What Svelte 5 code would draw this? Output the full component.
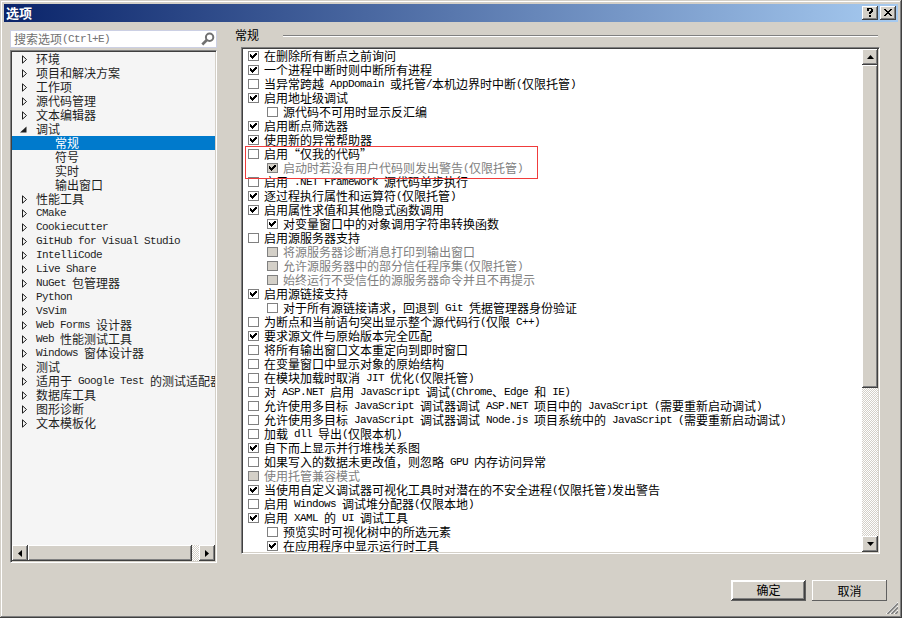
<script>
  // level 0 = top category, level 1 = page inside an open category
  const tree = [
    { text: "环境" },
    { text: "项目和解决方案" },
    { text: "工作项" },
    { text: "源代码管理" },
    { text: "文本编辑器" },
    { text: "调试", open: true },
    { text: "常规", level: 1 },
    { text: "符号", level: 1 },
    { text: "实时", level: 1 },
    { text: "输出窗口", level: 1 },
    { text: "性能工具" },
    { text: "CMake" },
    { text: "Cookiecutter" },
    { text: "GitHub for Visual Studio" },
    { text: "IntelliCode" },
    { text: "Live Share" },
    { text: "NuGet 包管理器" },
    { text: "Python" },
    { text: "VsVim" },
    { text: "Web Forms 设计器" },
    { text: "Web 性能测试工具" },
    { text: "Windows 窗体设计器" },
    { text: "测试" },
    { text: "适用于 Google Test 的测试适配器" },
    { text: "数据库工具" },
    { text: "图形诊断" },
    { text: "文本模板化" },
  ];

  let options = [
    { text: "在删除所有断点之前询问", on: true },
    { text: "一个进程中断时则中断所有进程", on: true },
    { text: "当异常跨越 AppDomain 或托管/本机边界时中断(仅限托管)" },
    { text: "启用地址级调试", on: true },
    { text: "源代码不可用时显示反汇编", sub: true },
    { text: "启用断点筛选器", on: true },
    { text: "使用新的异常帮助器", on: true },
    { text: "启用“仅我的代码”" },
    { text: "启动时若没有用户代码则发出警告(仅限托管)", sub: true, on: true, off: true },
    { text: "启用 .NET Framework 源代码单步执行" },
    { text: "逐过程执行属性和运算符(仅限托管)", on: true },
    { text: "启用属性求值和其他隐式函数调用", on: true },
    { text: "对变量窗口中的对象调用字符串转换函数", sub: true, on: true },
    { text: "启用源服务器支持" },
    { text: "将源服务器诊断消息打印到输出窗口", sub: true, off: true },
    { text: "允许源服务器中的部分信任程序集(仅限托管)", sub: true, off: true },
    { text: "始终运行不受信任的源服务器命令并且不再提示", sub: true, off: true },
    { text: "启用源链接支持", on: true },
    { text: "对于所有源链接请求，回退到 Git 凭据管理器身份验证", sub: true },
    { text: "为断点和当前语句突出显示整个源代码行(仅限 C++)" },
    { text: "要求源文件与原始版本完全匹配", on: true },
    { text: "将所有输出窗口文本重定向到即时窗口" },
    { text: "在变量窗口中显示对象的原始结构" },
    { text: "在模块加载时取消 JIT 优化(仅限托管)" },
    { text: "对 ASP.NET 启用 JavaScript 调试(Chrome、Edge 和 IE)" },
    { text: "允许使用多目标 JavaScript 调试器调试 ASP.NET 项目中的 JavaScript (需要重新启动调试)" },
    { text: "允许使用多目标 JavaScript 调试器调试 Node.js 项目系统中的 JavaScript (需要重新启动调试)" },
    { text: "加载 dll 导出(仅限本机)" },
    { text: "自下而上显示并行堆栈关系图", on: true },
    { text: "如果写入的数据未更改值，则忽略 GPU 内存访问异常" },
    { text: "使用托管兼容模式", off: true },
    { text: "当使用自定义调试器可视化工具时对潜在的不安全进程(仅限托管)发出警告", on: true },
    { text: "启用 Windows 调试堆分配器(仅限本地)" },
    { text: "启用 XAML 的 UI 调试工具", on: true },
    { text: "预览实时可视化树中的所选元素", sub: true },
    { text: "在应用程序中显示运行时工具", sub: true, on: true },
  ];

  let selected = "常规";

  function pick(item) {
    if (item.level) selected = item.text;
  }

  function toggle(opt) {
    if (opt.off) return;
    opt.on = !opt.on;
    options = options;
  }

  // latin letters take half the width of a han character, so they get their own span
  function runs(text) {
    return text.match(/[\x20-\x7e]+|[^\x20-\x7e]+/g);
  }
</script>

{#snippet mixed(text)}{#each runs(text) as r}<span class:latin={r.charCodeAt(0) < 127}>{r}</span>{/each}{/snippet}

<div class="window">
  <header>
    <h1>选项</h1>
    <button class="cap raised" aria-label="帮助">
      <svg width="8" height="10" viewBox="0 0 8 10" shape-rendering="crispEdges">
        <path d="M1 0h5v1h1v3h-1v1h-1v1h-2v-2h1v-1h1v-2h-2v2h-2v-2h0zM3 7h2v2h-2z" />
      </svg>
    </button>
    <button class="cap raised" aria-label="关闭">
      <svg width="8" height="7" viewBox="0 0 8 7" shape-rendering="crispEdges">
        <path d="M0 0h2v1h1v1h2v-1h1v-1h2v1h-1v1h-1v1h-1v1h1v1h1v1h1v1h-2v-1h-1v-1h-2v1h-1v1h-2v-1h1v-1h1v-1h1v-1h-1v-1h-1v-1h-1z" />
      </svg>
    </button>
  </header>

  <main>
    <section class="left">
      <div class="search">
        <span class="hint">{@render mixed("搜索选项(Ctrl+E)")}</span>
        <svg width="14" height="14" viewBox="0 0 14 14">
          <circle cx="8.6" cy="5.2" r="3.7" fill="none" stroke="#717171" stroke-width="2" />
          <path d="M5.8 8L1.3 12.5" stroke="#717171" stroke-width="2.6" />
        </svg>
      </div>

      <div class="tree sunken">
        <ul>
          {#each tree as item}
            <li class:child={item.level} class:selected={item.level && item.text === selected}>
              <button class="node" on:click={() => pick(item)}>
                <i class="arrow" class:open={item.open}>
                  {#if item.open}
                    <svg width="7" height="7" viewBox="0 0 7 7"><path d="M6.5 .5v6h-6.5z" fill="#1e1e1e" /></svg>
                  {:else if !item.level}
                    <svg width="6" height="9" viewBox="0 0 6 9"><path d="M.5 .8v7.4l4-3.7z" fill="none" stroke="#1e1e1e" /></svg>
                  {/if}
                </i>
                {@render mixed(item.text)}
              </button>
            </li>
          {/each}
        </ul>
        <div class="hbar">
          <div class="sbtn raised"><svg width="4" height="7" viewBox="0 0 4 7"><path d="M4 0v7l-4-3.5z" /></svg></div>
          <div class="thumb raised"></div>
          <div class="sbtn raised last"><svg width="4" height="7" viewBox="0 0 4 7"><path d="M0 0v7l4-3.5z" /></svg></div>
        </div>
      </div>
    </section>

    <section class="right">
      <h2>常规</h2>
      <div class="list sunken">
        <ul>
          {#each options as opt}
            <li class:sub={opt.sub} class:disabled={opt.off}>
              <button class="option" on:click={() => toggle(opt)}>
                <i class="box">
                  {#if opt.on}
                    <svg width="7" height="6" viewBox="0 0 7 6" shape-rendering="crispEdges">
                      <path d="M0 1h1v1h1v1h1v-1h1v-1h1v-1h2v2h-1v1h-1v1h-1v1h-1v1h-1v-1h-1v-1h-1z" />
                    </svg>
                  {/if}
                </i>
                {@render mixed(opt.text)}
              </button>
            </li>
          {/each}
        </ul>
        <div class="vbar">
          <div class="sbtn raised"><svg width="7" height="4" viewBox="0 0 7 4"><path d="M0 4h7l-3.5-4z" /></svg></div>
          <div class="thumb raised"></div>
          <div class="sbtn raised last"><svg width="7" height="4" viewBox="0 0 7 4"><path d="M0 0h7l-3.5 4z" /></svg></div>
        </div>
        <div class="marker"></div>
      </div>
    </section>
  </main>

  <footer>
    <button class="push default"><span class="raised">确定</span></button>
    <button class="push"><span>取消</span></button>
  </footer>

  <svg class="grip" width="12" height="12" viewBox="0 0 12 12">
    <path d="M0 12L12 0M4 12L12 4M8 12L12 8" stroke="#fff" />
    <path d="M1.4 12L12 1.4M5.4 12L12 5.4M9.4 12L12 9.4" stroke="#808080" stroke-width="1.7" />
  </svg>
</div>

<style>
  :global(body) {
    overflow: hidden;
  }

  .window {
    position: relative;
    display: flex;
    flex-direction: column;
    width: 902px;
    height: 618px;
    box-sizing: border-box;
    padding: 4px;
    background: #d4d0c8;
    box-shadow:
      inset -1px -1px #404040,
      inset 1px 1px #d4d0c8,
      inset -2px -2px #808080,
      inset 2px 2px #fff;
    font: 12px/14px "Noto Sans CJK SC", sans-serif;
    color: #000;
  }

  button {
    font: inherit;
    color: inherit;
    background: none;
    border: 0;
    padding: 0;
    margin: 0;
  }

  ul {
    list-style: none;
    margin: 0;
    padding: 0;
  }

  .latin {
    font-family: "Liberation Mono", monospace;
    font-size: 11px;
    letter-spacing: -0.6px;
    white-space: pre;
  }

  .raised {
    background: #d4d0c8;
    box-shadow:
      inset -1px -1px #404040,
      inset 1px 1px #fff,
      inset -2px -2px #808080;
  }

  .sunken {
    box-sizing: border-box;
    border: 1px solid;
    border-color: #808080 #fff #fff #808080;
    padding: 1px;
    box-shadow:
      inset 1px 1px #404040,
      inset -1px -1px #d4d0c8;
  }

  header {
    display: flex;
    align-items: center;
    gap: 2px;
    height: 18px;
    padding-right: 2px;
    background: linear-gradient(to right, #0a246a, #a6caf0);
  }
  h1 {
    flex: 1;
    margin: 0;
    padding-left: 2px;
    font-size: 13px;
    font-weight: bold;
    line-height: 18px;
    color: #fff;
  }
  .cap {
    display: flex;
    align-items: center;
    justify-content: center;
    box-sizing: border-box;
    width: 16px;
    height: 14px;
    padding: 0 1px 1px 0;
  }

  main {
    display: flex;
    height: 541px;
  }

  .left {
    width: 207px;
    margin-left: 6px;
    padding-top: 8px;
  }
  .search {
    display: flex;
    align-items: center;
    justify-content: space-between;
    box-sizing: border-box;
    height: 18px;
    margin-bottom: 2px;
    padding: 0 1px 0 3px;
    border: 1px solid #ccd0e4;
    background: #fff;
  }
  .hint {
    display: flex;
    align-items: center;
    color: #717171;
  }

  .tree {
    display: flex;
    flex-direction: column;
    height: 513px;
    background: #f5f5f5;
    color: #1e1e1e;
  }
  .tree ul {
    flex: 1;
    overflow: hidden;
  }
  .tree li {
    height: 14px;
    white-space: nowrap;
  }
  .node,
  .option {
    display: flex;
    align-items: center;
    height: 14px;
    white-space: pre;
  }
  .arrow {
    display: flex;
    align-items: center;
    width: 14px;
    height: 14px;
    padding-left: 10px;
  }
  .open {
    width: 16px;
    padding-left: 8px;
  }
  .child .arrow {
    width: 33px;
  }
  .selected {
    background: #007acc;
    color: #fff;
  }

  .hbar,
  .vbar {
    display: flex;
    background: repeating-conic-gradient(#fff 0 25%, #d4d0c8 0 50%) 0 0 / 2px 2px;
  }
  .hbar {
    height: 16px;
  }
  .hbar .thumb {
    width: 164px;
  }
  .sbtn {
    display: flex;
    align-items: center;
    justify-content: center;
    width: 16px;
    height: 16px;
  }
  .hbar .last {
    margin-left: auto;
  }

  .right {
    width: 639px;
    margin-left: 24px;
    padding-top: 6px;
  }
  h2 {
    display: flex;
    align-items: center;
    gap: 24px;
    height: 14px;
    margin: 0 2px 5px -6px;
    font-size: 12px;
    font-weight: normal;
  }
  h2::after {
    content: "";
    flex: 1;
    height: 1px;
    margin-top: 1px;
    background: #808080;
    border-bottom: 1px solid #fff;
  }

  .list {
    position: relative;
    display: flex;
    height: 507px;
    background: #fff;
  }
  .list ul {
    flex: 1;
    overflow: hidden;
  }
  .list li {
    height: 14px;
    padding-left: 5px;
    white-space: nowrap;
  }
  .list .sub {
    padding-left: 24px;
  }
  .box {
    display: flex;
    align-items: center;
    justify-content: center;
    box-sizing: border-box;
    width: 11px;
    height: 10px;
    margin-right: 5px;
    border: 1px solid #808080;
    background: #fff;
  }
  .disabled {
    color: #808080;
  }
  .disabled .box {
    background: #d4d0c8;
  }
  .vbar {
    flex-direction: column;
    width: 16px;
  }
  .vbar .thumb {
    height: 323px;
  }
  .vbar .last {
    margin-top: auto;
  }

  /* red frame over the "just my code" rows */
  .marker {
    position: absolute;
    left: 3px;
    top: 98px;
    width: 291px;
    height: 31px;
    border: 1px solid #f03c3c;
    pointer-events: none;
  }

  footer {
    display: flex;
    justify-content: flex-end;
    gap: 6px;
    margin-top: 17px;
    padding-right: 11px;
  }
  .push {
    width: 75px;
    height: 21px;
    box-shadow:
      inset -1px -1px #606060,
      inset 1px 1px #fff;
  }
  .push span {
    display: block;
    line-height: 20px;
  }
  .default {
    padding: 1px;
    background: #000;
  }
  .default span {
    height: 19px;
    line-height: 18px;
  }

  .grip {
    position: absolute;
    right: 4px;
    bottom: 4px;
  }
</style>
